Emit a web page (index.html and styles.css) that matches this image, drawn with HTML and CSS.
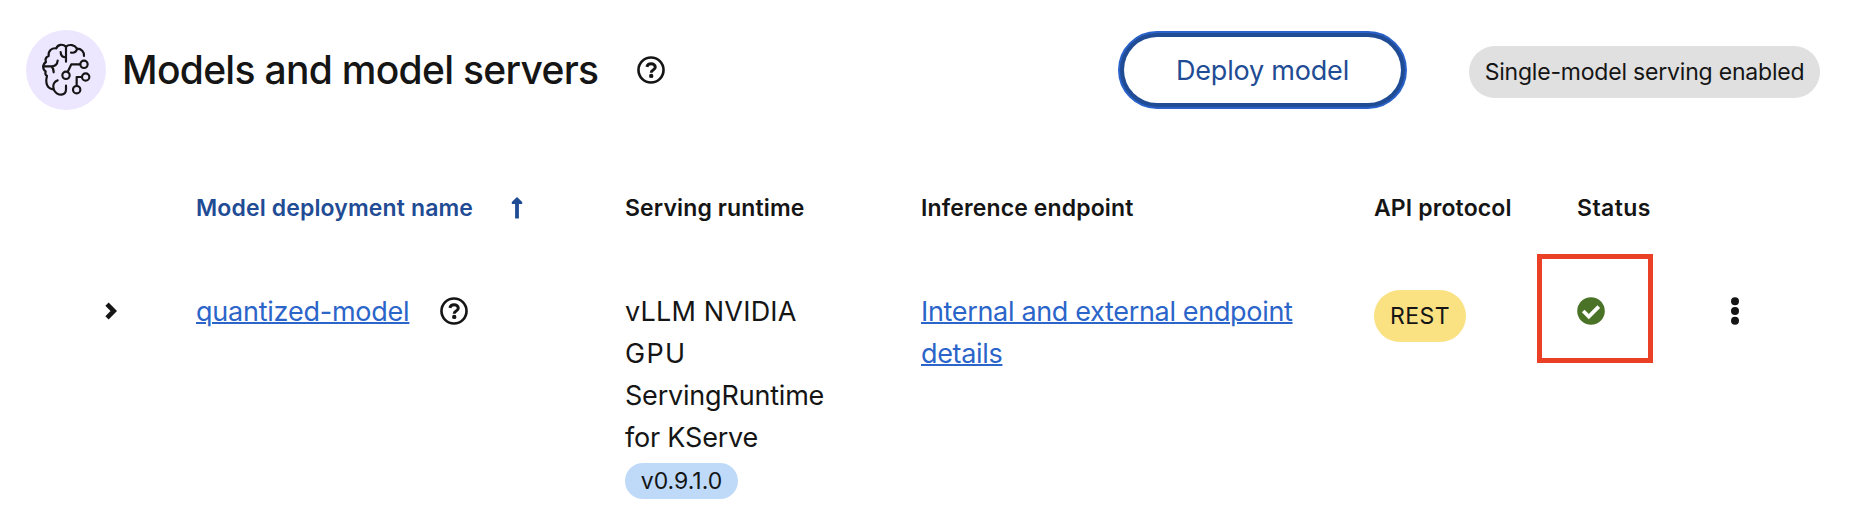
FILE: index.html
```html
<!DOCTYPE html>
<html lang="en">
<head>
<meta charset="utf-8">
<title>Models and model servers</title>
<link rel="stylesheet" href="styles.css">
</head>
<body>
<header class="header">
  <span class="model-icon">
    <svg viewBox="30 30 240 240" width="80" height="80" fill="none" stroke="#151515" stroke-width="6.5" stroke-linecap="round" stroke-linejoin="round">
      <path d="M204 108C205 95 196 86 183 86C177 75 160 71 150 80C140 71 125 73 121 85C107 83 96 93 98 108C89 112 87 119 90 126C79 133 79 148 89 154C87 160 88 165 93 168C87 190 94 206 113 208C118 220 128 224 137 224C146 223 150 216 150 208V197"/>
      <path d="M150 80V125M150 112C140 112 134 106 134 96M183 86C182 95 175 99 165 98"/>
      <path d="M82 139H106M125 122C124 132 117 139 106 139C111 143 113 149 113 157M113 208C109 195 114 184 125 181"/>
      <path d="M155 156L166 133H193M182 198V171H198"/>
      <circle cx="150" cy="166" r="11"/><circle cx="204" cy="133" r="11"/><circle cx="209" cy="171" r="11"/><circle cx="182" cy="209" r="11"/>
    </svg>
  </span>
  <h1 class="title">Models and model servers</h1>
  <svg class="help" viewBox="0 0 512 512"><use href="#help"/></svg>
  <button class="deploy"><span class="deploy-text">Deploy model</span></button>
  <span class="label label-grey">Single-model serving enabled</span>
</header>
<main class="table">
  <div class="row head">
    <div></div>
    <div class="sorted">Model deployment name
      <svg class="arrow" viewBox="0 0 10 22"><path d="M5 0L10.2 5V7H6.9V21.5H3.1V7H-.2V5z" fill="currentColor"/></svg></div>
    <div>Serving runtime</div>
    <div>Inference endpoint</div>
    <div>API protocol</div>
    <div class="status-head">Status</div>
    <div></div>
  </div>
  <div class="row body">
    <div class="toggle"><svg viewBox="0 0 12 18" width="12" height="18"><path d="M2 2.2L8.8 9L2 15.8" fill="none" stroke="#151515" stroke-width="4.6"/></svg></div>
    <div class="name"><a class="link">quantized-model</a>
      <svg class="help" viewBox="0 0 512 512"><g id="help"><circle cx="256" cy="256" r="229" fill="none" stroke="#151515" stroke-width="48"/><path d="M180 200C190 158 222 142 258 142C300 142 334 166 334 204C334 258 260 254 260 304" fill="none" stroke="#151515" stroke-width="54"/><circle cx="260" cy="364" r="40" fill="#151515"/></g></svg></div>
    <div class="runtime"><span class="caps">vLLM NVIDIA</span><br><span class="caps-wide">GPU</span><br><span class="tight">ServingRuntime<br>for KServe</span>
      <span class="label label-blue">v0.9.1.0</span></div>
    <div class="endpoint"><a class="link">Internal and external endpoint<br>details</a></div>
    <div><span class="label label-yellow">REST</span></div>
    <div class="status"><svg viewBox="0 0 28 28" width="28" height="28"><circle cx="14" cy="14" r="13.8" fill="#4a7328"/><path d="M6.2 14L11.8 19.6L21.8 9.6" fill="none" stroke="#fff" stroke-width="3.7"/></svg><span class="highlight"></span></div>
    <div class="kebab"><svg viewBox="0 0 8 28" width="8" height="28" fill="#151515"><circle cx="4" cy="4.2" r="4"/><circle cx="4" cy="14" r="4"/><circle cx="4" cy="23.8" r="4"/></svg></div>
  </div>
</main>
</body>
</html>
```
FILE: styles.css
```css
* { box-sizing: border-box; }
body { margin: 0; background: #fff; color: #151515; font-family: Inter, "Liberation Sans", sans-serif; font-size: 27px; line-height: 42px; }

.header { display: flex; align-items: center; height: 140px; padding-left: 26px; }
.model-icon { width: 80px; height: 80px; border-radius: 50%; background: #ece6ff; }
.model-icon svg { display: block; }
.title { margin: 0 0 0 16px; width: 515px; font-size: 39px; font-weight: 500; letter-spacing: -0.7px; white-space: nowrap; }
.help { display: block; width: 28px; height: 28px; flex: none; }
.deploy { display: flex; margin-left: 453px; width: 289px; height: 78px; padding: 4px; border: 2px solid #2b62ca; border-radius: 39px; background: #1f4c94; color: #1f4c94; font: inherit; letter-spacing: -0.2px; }
.deploy-text { display: flex; flex: 1; align-items: center; justify-content: center; height: 66px; padding-top: 1px; border-radius: 33px; background: #fff; }

.label { display: flex; align-items: center; justify-content: center; height: 52px; border-radius: 26px; font-size: 23px; white-space: nowrap; }
.label-grey { margin: 4px 0 0 62px; width: 351px; background: #e0e0e0; letter-spacing: -0.2px; }
.label-blue { margin-top: 4px; width: 113px; height: 36px; background: #bfdaf9; letter-spacing: 0; }
.label-yellow { width: 92px; background: #fae182; letter-spacing: 0.5px; }

.row { display: grid; grid-template-columns: 91px 429px 296px 453px 203px 154px 40px; padding-left: 105px; white-space: nowrap; }
.head { height: 150px; padding-top: 47px; font-size: 23px; font-weight: 600; letter-spacing: 0.13px; }
.sorted { display: flex; align-items: center; gap: 39px; height: 42px; color: #1f4c94; }
.arrow { width: 10px; height: 22px; overflow: visible; }
.status-head { letter-spacing: 0.45px; }

.body > div { position: relative; }
.toggle { height: 42px; }
.name { display: flex; align-items: center; gap: 31px; height: 42px; }
.name .link { padding-top: 1px; letter-spacing: -0.23px; }
.runtime, .endpoint { padding-top: 1px; }
.endpoint { letter-spacing: -0.33px; }
.caps { letter-spacing: 0.2px; }
.caps-wide { letter-spacing: 1.3px; }
.tight { letter-spacing: -0.2px; }
.link { color: #2b65c9; text-decoration: underline; text-decoration-thickness: 2px; }
.status svg, .kebab svg { display: block; margin-top: 7px; }

/* Red frame drawing attention to the status icon */
.highlight { position: absolute; left: -40px; top: -36px; width: 116px; height: 109px; border: 5px solid #ea4025; }
```
